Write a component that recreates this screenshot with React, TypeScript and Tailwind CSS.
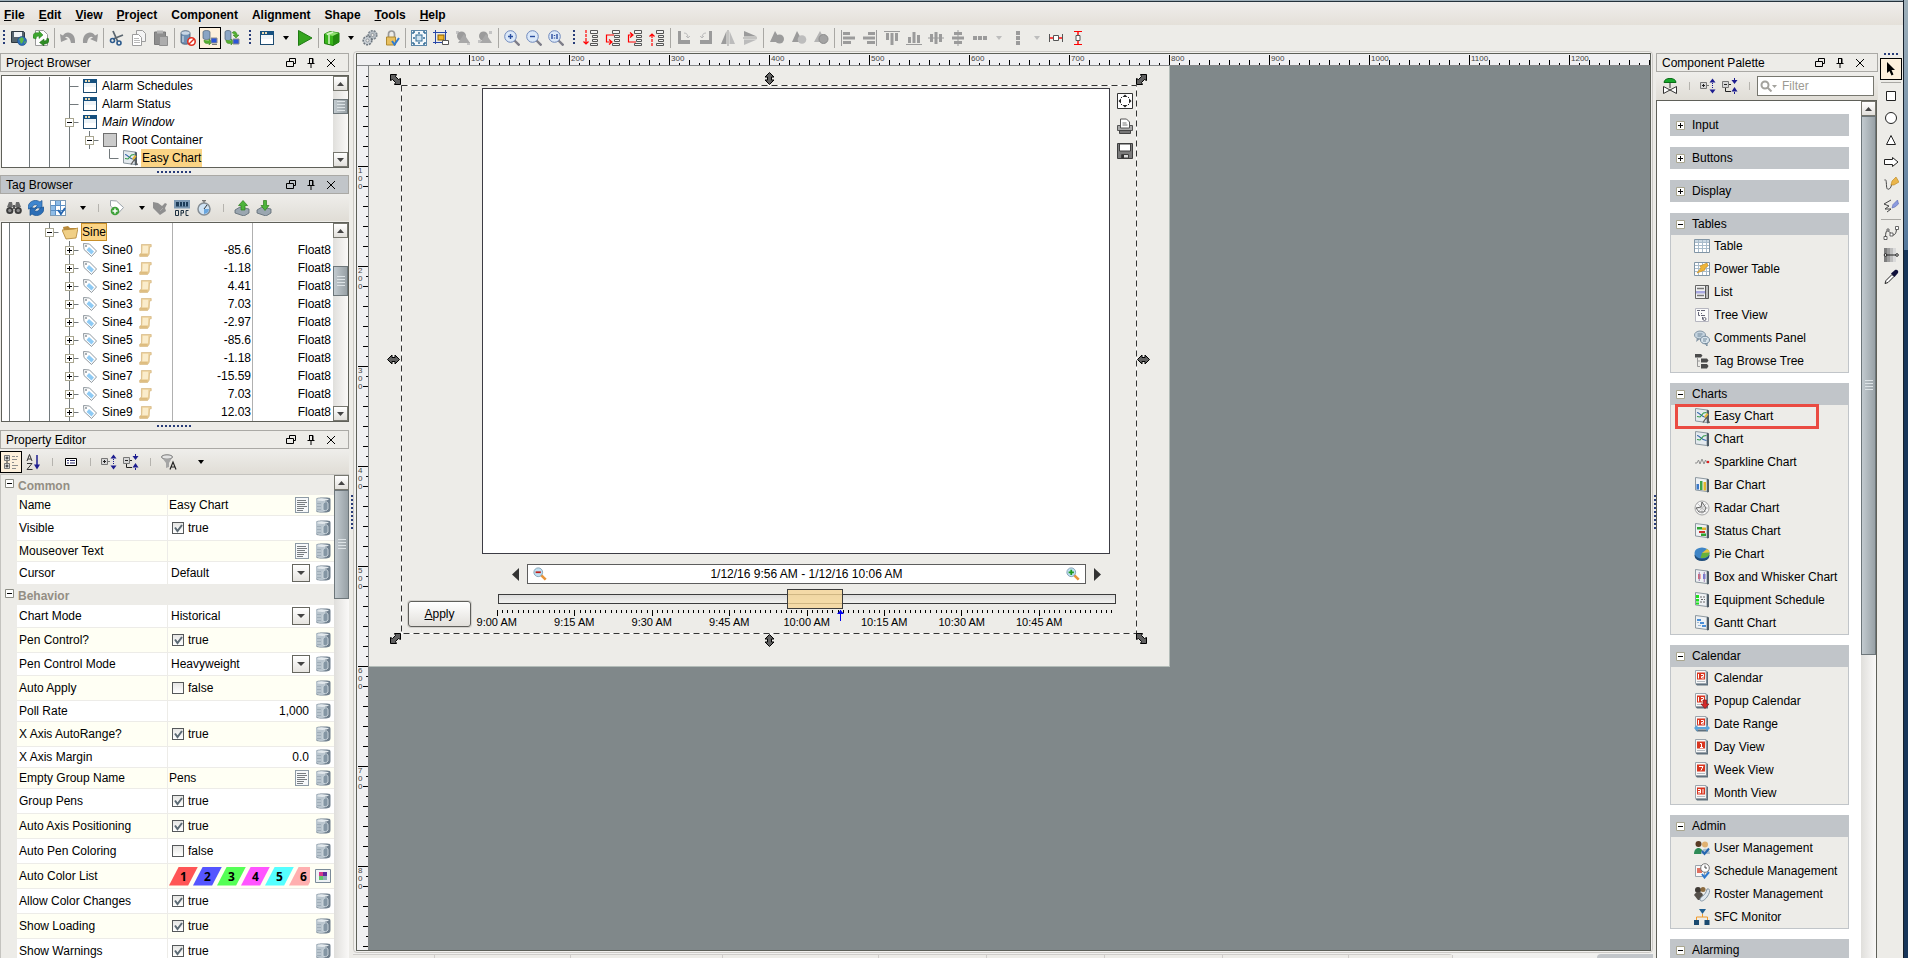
import type { ReactNode } from 'react';
import { clsx } from 'clsx';

type Kids = { children?: ReactNode };

function Svg({ children, className = 'w-4 h-4' }: Kids & { className?: string }) {
  return (
    <svg viewBox="0 0 16 16" className={clsx('shrink-0', className)} fill="none" aria-hidden="true">
      {children}
    </svg>
  );
}

/* ---------- shared glyphs ---------- */

const GRAY = '#9b9b9b';

const windowIcon = (
  <Svg>
    <rect x="1.500" y="1.500" width="13" height="13" fill="#fff" stroke="#1d4b70" />
    <path d="M1 1h14v4H1z" fill="#15507f" />
    <path d="M3 2h2v2H3zM6 2h2v2H6z" fill="#e9d9b0" />
    <path d="M2 5h12v4H2z" fill="#eef4f8" />
  </Svg>
);

const chartPanel = (
  <>
    <path d="M1.500.5L13 2v12.500L1.500 13z" fill="#e4eaef" stroke="#8b979f" />
    <path d="M13 1.500l2 1v12.500l-2 .5z" fill="#4e5c67" />
    <path d="M3 4.500c3 0 4 5 9.500 5" stroke="#2f63a8" strokeWidth="1.100" />
    <path d="M3 8.500l3 .5L9.500 5l3-.5" stroke="#2f9a45" strokeWidth="1.100" />
  </>
);

const easyChartIcon = (
  <Svg>
    {chartPanel}
    <path d="M9 14.500l3.500-5 3 5.500" stroke="#5f5f5f" strokeWidth="1.300" />
    <path d="M10 8.500l3-3.500 1.500 1.500L11.500 10z" fill="#e5b73b" />
  </Svg>
);

const expandIcon = (
  <Svg>
    <path d="M.5 4.500h6v6h-6zM7 7.500h2" stroke="#777" fill="#d7d7d7" />
    <path d="M2 7.500h3M3.500 6v3" stroke="#222" />
    <path d="M9.500 4.500h6l-3-4zM9.500 11.500h6l-3 4z" fill="#1d1d8f" />
    <path d="M12.500 5v6" stroke="#1d1d8f" strokeDasharray="1 1" />
  </Svg>
);

const collapseIcon = (
  <Svg>
    <path d="M.5 3.500h6v6h-6z" stroke="#777" fill="#d7d7d7" />
    <path d="M2 6.500h3" stroke="#222" />
    <path d="M7 6.500h2M3.500 10v3.500H9" stroke="#222" />
    <path d="M9.500 2h6l-3 4zM9.500 13.500h6l-3-4.500z" fill="#1d1d8f" />
    <path d="M12.500 0v2M12.500 14v2" stroke="#1d1d8f" />
  </Svg>
);

const dbCyl = (
  <>
    <path d="M1 3c0-3 9-3 9 0v9c0 3-9 3-9 0z" fill="#6f8fb3" stroke="#44566a" strokeWidth=".8" />
    <ellipse cx="5.500" cy="3" rx="4.200" ry="1.800" fill="#c9d6e4" />
    <path d="M3 6v6" stroke="#dfe8f0" />
  </>
);

const bindIcon = (
  <Svg>
    <path d="M1 3C1 .5 4 .5 9 .5S15.500.5 15.500 3v9c0 3.500-3 3.500-7.500 3.500S1 15.500 1 13z" fill="#6f7f8d" />
    <path d="M1 3c0-2 3-2 4.500-2S10 1.500 10 3v11c-1 1.500-9 1.500-9-1z" fill="#b9c5ce" />
    <path d="M2 3c1-1.500 9-2 12-.5-2 1.500-9 2-12 .5z" fill="#e3e9ed" />
    <path d="M2 6.500h4M2 9.500h4M2 12.500h4" stroke="#9fadb8" />
    <path d="M8 7c1-3 5-3 5 0v5c-1 2-4 2-5 1z" fill="#8496a4" stroke="#dbe3e8" strokeWidth=".8" />
  </Svg>
);

const textEditIcon = (
  <Svg>
    <rect x="1.500" y=".5" width="13" height="15" fill="#f6f8fa" stroke="#8d9aa5" />
    <path d="M3 3.500h9M3 5.500h10M3 7.500h8M3 9.500h10M3 11.500h7M3 13.500h6" stroke="#777c80" />
  </Svg>
);

const lens = (sign: ReactNode) => (
  <Svg>
    <path d="M10.500 10.500l5 5" stroke="#7d7d88" strokeWidth="2.400" />
    <circle cx="6.500" cy="6.500" r="5.800" fill="#dbe8f8" stroke="#6f89bd" />
    <g stroke="#2b4fa0" strokeWidth="1.400">{sign}</g>
  </Svg>
);

/* ---------- main toolbar ---------- */

const dbToClient = (
  <Svg>
    <path d="M1 2c0-2 7-2 7 0v6c0 2-7 2-7 0z" fill="#8aa5c4" stroke="#4c5f73" strokeWidth=".7" />
    <path d="M2 10c0 4 3 4 5 3v2l3-3-3-3v1.500" fill="#55b030" stroke="#2e7a18" strokeWidth=".5" />
    <path d="M9 8h6v5H9z" fill="#2b55d8" stroke="#8c8c8c" />
    <path d="M10 14.500h5" stroke="#777" />
  </Svg>
);

type Tool = { name: string; icon: ReactNode; on?: boolean } | 'sep' | 'dots' | 'caret' | 'caretOff';

const bars = (d: string) => <Svg><path d={d} fill={GRAY} /></Svg>;
const stack = (arrow: string) => (
  <Svg>
    <path d="M7.500.5h7v3h-7zM9.500 5.500h5v2h-5zM9.500 9.500h5v2h-5zM7.500 13.500h7v2h-7z" stroke="#555" fill="#f4f4f4" />
    <path d={arrow} stroke="#f00" strokeWidth="1.200" />
  </Svg>
);

const toolbar: Tool[] = [
  'dots',
  { name: 'Save', icon: (
    <Svg>
      <path d="M.5 1.500h12l1 1v10h-13z" fill="#56646e" stroke="#2f3a42" />
      <path d="M3 2h8v5H3z" fill="#f0f3f5" />
      <circle cx="11" cy="11" r="4.500" fill="#2d6fb8" stroke="#1d4a80" strokeWidth=".6" />
      <path d="M8 9l3-2 2 2-1 3-2 2-1-3zM13 12l2-1-1 3z" fill="#5cb84a" />
    </Svg>) },
  { name: 'Update', icon: (
    <Svg>
      <path d="M2.500.5h8l4 4v11h-12z" fill="#fdfdfd" stroke="#9a9a9a" />
      <path d="M0 8V6c0-3 3-4 6-3V1l4 4-4 3.500V6C4 6 3 7 3 9z" fill="#3da52f" stroke="#237a18" strokeWidth=".5" />
      <path d="M16 9v1c0 3-2 4-5 4v2l-4.500-3.500L11 9v2c2 0 3-1 3-3z" fill="#2e8d24" stroke="#1b6313" strokeWidth=".5" />
    </Svg>) },
  'sep',
  { name: 'Undo', icon: <Svg><path d="M0 4l1 8 7-3-3-1.500c2-2 5-.5 6 5.500h4C16 2 6 0 3 5.500z" fill={GRAY} /></Svg> },
  { name: 'Redo', icon: <Svg><path d="M16 4l-1 8-7-3 3-1.500C9 5.500 6 7 5 13H1C0 2 10 0 13 5.500z" fill={GRAY} /></Svg> },
  'sep',
  { name: 'Cut', icon: (
    <Svg>
      <path d="M4 1l4.500 10M14 5L4 9" stroke="#5c6770" strokeWidth="1.800" />
      <circle cx="3.500" cy="10.500" r="2" stroke="#2c5a8c" strokeWidth="1.600" />
      <circle cx="10" cy="13" r="2" stroke="#2c5a8c" strokeWidth="1.600" />
    </Svg>) },
  { name: 'Copy', icon: (
    <Svg>
      <path d="M5.500.5h6l3 3v8h-9z" fill="#f4f4f4" stroke="#9c9c9c" />
      <path d="M1.500 4.500h6l3 3v8h-9z" fill="#fff" stroke="#9c9c9c" />
      <path d="M3 8.500h5M3 10.500h6M3 12.500h6" stroke="#b9b9b9" />
    </Svg>) },
  { name: 'Paste', icon: (
    <Svg>
      <path d="M1.500 2h11v12.500h-11z" fill="#8e8e8e" stroke="#7a7a7a" />
      <path d="M4 .5h6v3H4z" fill="#b5b5b5" />
      <path d="M6.500 6.500h8v9h-8z" fill="#adadad" stroke="#8e8e8e" />
    </Svg>) },
  'sep',
  { name: 'Comm off', icon: <Svg>{dbCyl}<circle cx="11.500" cy="11.500" r="3.700" fill="#fff" stroke="#e03020" strokeWidth="1.600" /><path d="M9 14l5-5" stroke="#e03020" strokeWidth="1.500" /></Svg> },
  { name: 'Comm read-only', icon: dbToClient, on: true },
  { name: 'Comm read/write', icon: (
    <Svg>
      <path d="M1 2c0-2 6-2 6 0v7c0 2-6 2-6 0z" fill="#8aa5c4" stroke="#4c5f73" strokeWidth=".7" />
      <path d="M8 3c2-3 5-1 5 2h2l-3 3-3-3h2M2 10c0 4 3 4 5 3v2l3-3-3-3v1.500" fill="#55b030" stroke="#2e7a18" strokeWidth=".5" />
      <path d="M9 9h6v5H9z" fill="#2b55d8" stroke="#8c8c8c" />
    </Svg>) },
  'dots',
  { name: 'New window', icon: windowIcon },
  'caret',
  { name: 'Preview', icon: <Svg><path d="M1.500.5L15 8 1.500 15.500z" fill="#35a51f" stroke="#1f7a12" /></Svg> },
  'sep',
  { name: 'Publish', icon: (
    <Svg>
      <path d="M.5 4L6 1.500l9 1.500v9l-6 3.500-8.500-2z" fill="#39b51c" stroke="#1d7a0c" />
      <path d="M.5 4L9 6l6-3-9-1.500z" fill="#8fe070" />
      <path d="M9 6v9.500l6-3.500V3z" fill="#23890f" />
      <path d="M3 4.500l6-2.500M5 5v9" stroke="#d6f5c8" strokeWidth="1.500" />
    </Svg>) },
  'caret',
  { name: 'Project properties', icon: (
    <Svg>
      <circle cx="10.500" cy="5" r="4.300" fill="#b8bfc5" stroke="#7d868e" strokeDasharray="2 1" strokeWidth="1.600" />
      <circle cx="10.500" cy="5" r="1.500" fill="#edece8" stroke="#6d767e" strokeWidth=".6" />
      <circle cx="5.500" cy="10.500" r="4.300" fill="#c9cfd4" stroke="#6d767e" strokeDasharray="2 1" strokeWidth="1.600" />
      <circle cx="5.500" cy="10.500" r="1.500" fill="#edece8" stroke="#6d767e" strokeWidth=".6" />
    </Svg>) },
  { name: 'Security', icon: (
    <Svg>
      <path d="M4.500 8V4c0-4 6-4 6 0v4" stroke="#9a9a9a" strokeWidth="1.700" />
      <path d="M2.500 7h9v8h-9z" fill="#e8c060" stroke="#b08a30" />
      <path d="M8 11l2.500 3.500L15 8" stroke="#2f7ad0" strokeWidth="2" />
    </Svg>) },
  'sep',
  { name: 'Zoom to window', icon: (
    <Svg>
      <rect x=".5" y=".5" width="15" height="15" fill="#f5f9fc" stroke="#5d87a8" />
      <rect x="5" y="5" width="6" height="6" fill="#cfe2ef" stroke="#2f6a94" />
      <path d="M2 2h2M2 2v2M14 2h-2M14 2v2M2 14h2M2 14v-2M14 14h-2M14 14v-2M8 2v2M8 12v2M2 8h2M12 8h2" stroke="#2f6a94" strokeWidth="1.400" />
    </Svg>) },
  { name: 'Selection policy', icon: (
    <Svg>
      <path d="M2.500 0v14M0 2.500h14M12.500 0v10M0 12.500h9" stroke="#2848a8" />
      <rect x="5" y="5" width="6" height="5" fill="#f0b428" stroke="#8a5f00" />
      <path d="M9.500 10.500h6v4h-6z" fill="#fff" stroke="#555" />
    </Svg>) },
  { name: 'Group', icon: <Svg><path d="M1 1h3v3H1zM12 12h3v3h-3z" fill="#c4c4c4" /><circle cx="6.500" cy="6" r="4.500" fill={GRAY} /><path d="M9 4l6 9H3z" fill="#a8a8a8" /></Svg> },
  { name: 'Ungroup', icon: <Svg><path d="M1 10h3v3H1zM12 1h3v3h-3z" fill="#c4c4c4" /><circle cx="6.500" cy="6" r="4.500" fill={GRAY} /><path d="M9 4l6 9H3z" fill="#a8a8a8" /></Svg> },
  'sep',
  { name: 'Zoom in', icon: lens(<path d="M4 6.500h5M6.500 4v5" />) },
  { name: 'Zoom out', icon: lens(<path d="M4 6.500h5" />) },
  { name: 'Actual size', icon: lens(<path d="M4 4v5M9 4v5M6.500 5v1M6.500 7.500v1" />) },
  'dots',
  { name: 'Send to back', icon: stack('M3 0v3M3 4v3M3 8v6M.5 11.500L3 14l2.500-2.500') },
  { name: 'Send backward', icon: stack('M9 5H1.500v7H6M4 9.500L7 12l-3 2.500') },
  { name: 'Bring forward', icon: stack('M9 12H1.500V5H5M3 2.500L6 5 3 7.500') },
  { name: 'Bring to front', icon: stack('M3 16v-3M3 12V9M3 8V4M.5 6.500L3 4l2.500 2.500') },
  'sep',
  { name: 'Rotate right', icon: <Svg><path d="M2 1h3v9h9v4H2z" fill={GRAY} /><path d="M8 3c3 0 4 2 4 5M10 6l2 2 2-2" stroke="#bbb" /></Svg> },
  { name: 'Rotate left', icon: <Svg><path d="M14 1h-3v9H2v4h12z" fill={GRAY} /><path d="M8 3C5 3 4 5 4 8M6 6L4 8 2 6" stroke="#bbb" /></Svg> },
  { name: 'Flip horizontal', icon: <Svg><path d="M6.500 1v13H1z" fill={GRAY} /><path d="M9.500 1v13H15z" fill="#bcbcbc" /><path d="M8 0v16" stroke={GRAY} /></Svg> },
  { name: 'Flip vertical', icon: <Svg><path d="M2 1v5.500h13z" fill={GRAY} /><path d="M2 15V9.500h13z" fill="#bcbcbc" /><path d="M1 8h14" stroke={GRAY} /></Svg> },
  'sep',
  { name: 'Union', icon: <Svg><path d="M1 12L6 1l3 5z" fill={GRAY} /><circle cx="10.500" cy="9" r="4.500" fill={GRAY} /><path d="M1 12h9V6H5z" fill={GRAY} /></Svg> },
  { name: 'Difference', icon: <Svg><path d="M1 12L6 1l6 11z" fill={GRAY} /><circle cx="11" cy="9.500" r="4.300" fill="#bdbdbd" /></Svg> },
  { name: 'Intersection', icon: <Svg><path d="M1 12L7 1l6 11z" fill="#b4b4b4" /><circle cx="10.500" cy="9" r="4.500" fill="#a3a3a3" stroke="#8c8c8c" /></Svg> },
  'sep',
  { name: 'Align left', icon: bars('M1 0h1v16H1zM3 2h7v3H3zM3 6.500h12v3H3zM3 11h8v3H3z') },
  { name: 'Align right', icon: bars('M14 0h1v16h-1zM6 2h7v3H6zM1 6.500h12v3H1zM5 11h8v3H5z') },
  { name: 'Align top', icon: bars('M0 1h16v1H0zM2 3h3v7H2zM6.500 3h3v12h-3zM11 3h3v8h-3z') },
  { name: 'Align bottom', icon: bars('M0 14h16v1H0zM2 7h3v6H2zM6.500 2h3v11h-3zM11 5h3v8h-3z') },
  { name: 'Center vertically', icon: bars('M0 7.500h16v1H0zM2 4h3v8H2zM6.500 2h3v12h-3zM11 4h3v8h-3z') },
  { name: 'Center horizontally', icon: bars('M7.500 0h1v16h-1zM4 2h8v3H4zM2 6.500h12v3H2zM4 11h8v3H4z') },
  { name: 'Row spacing', icon: bars('M1 6h4v4H1zM6 6h4v4H6zM11 6h4v4h-4z') },
  'caretOff',
  { name: 'Column spacing', icon: bars('M6 1h4v4H6zM6 6h4v4H6zM6 11h4v4H6z') },
  'caretOff',
  { name: 'Equal width', icon: <Svg><path d="M2 8h12" stroke="#f00" strokeWidth="1.400" /><path d="M1.500 4v8M14.500 4v8" stroke="#555" /><path d="M5.500 5.500h5v5h-5z" fill="#fff" stroke="#555" /></Svg> },
  { name: 'Equal height', icon: <Svg><path d="M8 2v12" stroke="#f00" strokeWidth="1.400" /><path d="M4 1.500h8M4 14.500h8" stroke="#f00" /><path d="M6 5.500h4v5H6z" fill="#fff" stroke="#555" /></Svg> },
];

function Caret({ className = 'w-4 justify-center', off }: { className?: string; off?: boolean }) {
  return (
    <button aria-label="More" className={clsx('flex h-full items-center', className)}>
      <svg viewBox="0 0 6 4" className="w-1.5 h-1"><path d="M0 0h6L3 4z" fill={off ? '#bdbdbd' : '#000'} /></svg>
    </button>
  );
}

function Sep() {
  return <span className="flex w-4 justify-center"><span className="w-px h-2 bg-[#b5b3ae]" /></span>;
}

function ToolButton({ name, on, children }: Kids & { name: string; on?: boolean }) {
  return (
    <button aria-label={name} className={clsx('flex w-[22px] h-[22px] shrink-0 items-center justify-center', on && 'border border-black bg-[#fdf0dc]')}>
      {children}
    </button>
  );
}

function Dots({ vertical }: { vertical?: boolean }) {
  return vertical
    ? <span className="w-[2px] h-[34px] bg-[repeating-linear-gradient(180deg,#283c78_0_2px,transparent_2px_4px)]" />
    : <span className="w-[35px] h-[2px] bg-[repeating-linear-gradient(90deg,#283c78_0_2px,transparent_2px_4px)]" />;
}

/* ---------- docked panel pieces ---------- */

function PanelTitle({ title, active }: { title: string; active?: boolean }) {
  return (
    <div className={clsx('flex h-[19px] shrink-0 items-center border border-[#aaa9a5] pl-[5px] pr-[7px]', active && 'bg-[#c1c5c9]')}>
      <h2 className="flex-1">{title}</h2>
      <button aria-label="Float" className="flex w-5 justify-center">
        <svg viewBox="0 0 10 10" className="w-2.5 h-2.5" fill="none" stroke="#000"><path d="M3.500 3.500v-3h6v5h-2M.5 3.500h7v5h-7z" /></svg>
      </button>
      <button aria-label="Pin" className="flex w-5 justify-center">
        <svg viewBox="0 0 8 10" className="w-2 h-2.5" fill="none" stroke="#000"><path d="M2 .5h4v5M2.500.5v5M.5 5.500h7M5.500 1v4M4 6v4" /></svg>
      </button>
      <button aria-label="Close" className="flex w-5 justify-center">
        <svg viewBox="0 0 8 8" className="w-2 h-2" fill="none" stroke="#000"><path d="M0 0l8 8M8 0L0 8" /></svg>
      </button>
    </div>
  );
}

function Scrollbar({ thumb, noEnd }: { thumb: string; noEnd?: boolean }) {
  const btn = 'flex h-[15px] shrink-0 items-center justify-center border border-[#77776f] bg-gradient-to-b from-white to-[#e2e0dc]';
  return (
    <div className="flex w-[15px] shrink-0 flex-col bg-gradient-to-r from-[#e0dfdc] to-[#faf9f8]">
      <button aria-label="Scroll up" className={btn}>
        <svg viewBox="0 0 7 4" className="w-[7px] h-1"><path d="M0 4h7L3.500 0z" fill="#444" /></svg>
      </button>
      <div className={clsx('flex shrink-0 items-center justify-center border border-[#6d767a] bg-gradient-to-r from-[#c2cacf] to-[#98a1a6]', thumb)}>
        <span className="w-2 h-[11px] bg-[repeating-linear-gradient(180deg,#dde3e6_0_1px,transparent_1px_3px)]" />
      </div>
      <span className="flex-1" />
      {!noEnd && (
        <button aria-label="Scroll down" className={btn}>
          <svg viewBox="0 0 7 4" className="w-[7px] h-1"><path d="M0 0h7L3.500 4z" fill="#444" /></svg>
        </button>
      )}
    </div>
  );
}

// guide cells: v line, t tee, m minus box, p plus box, l elbow, _ blank
function Guides({ kinds }: { kinds: string }) {
  return (
    <>
      {kinds.split('').map((k, i) => (
        <svg key={i} viewBox="0 0 20 18" className="w-5 h-[18px] shrink-0" fill="none" stroke="#72797c" aria-hidden="true">
          {'vtmp'.includes(k) && <path d="M7.500 0v18" />}
          {k === 'l' && <path d="M7.500 0v9.500h9" />}
          {'tmp'.includes(k) && <path d="M7.500 9.500h9" />}
          {'mp'.includes(k) && <rect x="3.500" y="5.500" width="8" height="8" fill="#fff" stroke="#a9a690" />}
          {'mp'.includes(k) && <path d={k === 'p' ? 'M5 9.500h5M7.500 7v5' : 'M5 9.500h5'} stroke="#000" />}
        </svg>
      ))}
    </>
  );
}

/* ---------- project browser ---------- */

const projectRows = [
  { guides: '_vvt', label: 'Alarm Schedules', icon: windowIcon },
  { guides: '_vvt', label: 'Alarm Status', icon: windowIcon },
  { guides: '_vvm', label: 'Main Window', icon: windowIcon, italic: true },
  { guides: '_vvvm', label: 'Root Container', icon: <Svg><rect x="1.500" y="1.500" width="13" height="13" fill="#cbcbcb" stroke="#6f6f6f" /></Svg> },
  { guides: '_vvv_l', label: 'Easy Chart', icon: easyChartIcon, selected: true },
];

function ProjectBrowser() {
  return (
    <section>
      <PanelTitle title="Project Browser" />
      <div className="ml-px mt-[3px] flex h-[93px] border border-[#5f6059] bg-white">
        <ul className="flex-1 overflow-hidden pt-px">
          {projectRows.map(r => (
            <li key={r.label} className="flex h-[18px] items-center">
              <Guides kinds={r.guides} />
              {r.icon}
              <span className={clsx('ml-[3px] h-[18px] px-px leading-[18px]', r.italic && 'italic', r.selected && 'bg-[#fbd485]')}>{r.label}</span>
            </li>
          ))}
        </ul>
        <Scrollbar thumb="mt-2 h-[15px]" />
      </div>
    </section>
  );
}

/* ---------- tag browser ---------- */

const tags = [
  ['Sine0', '-85.6'], ['Sine1', '-1.18'], ['Sine2', '4.41'], ['Sine3', '7.03'], ['Sine4', '-2.97'],
  ['Sine5', '-85.6'], ['Sine6', '-1.18'], ['Sine7', '-15.59'], ['Sine8', '7.03'], ['Sine9', '12.03'],
];

const tagIcon = (
  <Svg>
    <path d="M1.500 1.500l6 .5 7 7-5 5.500-7.500-7z" fill="#fff" stroke="#8f989f" />
    <path d="M7 5l5 4.500-2.500 3-5-4.500z" fill="#8fcbf5" />
    <circle cx="4" cy="4" r="1" fill="#8b949b" />
  </Svg>
);

const scrollIcon = (
  <Svg className="w-[13px] h-[13px]">
    <path d="M3 .5h12v3h-2l-.5 9-2 3H1C0 14 .500 12 3 11.500z" fill="#ecd09a" stroke="#d0b075" strokeWidth=".8" />
    <path d="M4.500 2h7l-.5 9.500H4z" fill="#faeccb" />
    <path d="M1.500 13.500h9" stroke="#c9a05c" />
  </Svg>
);

function TagBrowser() {
  return (
    <section>
      <PanelTitle title="Tag Browser" active />
      <div className="flex h-[27px] items-center bg-gradient-to-b from-[#efeeeb] to-[#e0ddd6] pl-[3px]">
        <ToolButton name="Find">
          <Svg>
            <path d="M3 2h3l1 5H1zM10 2h3l2 5H9z" fill="#6b6b6b" />
            <circle cx="3.800" cy="10.500" r="3.600" fill="#3c3c3c" /><circle cx="12.200" cy="10.500" r="3.600" fill="#3c3c3c" />
            <circle cx="3.800" cy="10.500" r="1.700" fill="#8b8b8b" /><circle cx="12.200" cy="10.500" r="1.700" fill="#8b8b8b" />
            <path d="M7 5h2v4H7z" fill="#555" />
          </Svg>
        </ToolButton>
        <ToolButton name="Refresh">
          <Svg>
            <path d="M0 9C-1 2 7-2 12 2l2-1.500V8H7l2.500-2.500C7 4 5 5 4 8z" fill="#3f86cf" stroke="#1d5590" strokeWidth=".7" />
            <path d="M16 7c1 7-7 11-12 7l-2 1.500V8h7l-2.500 2.500C9 12 11 11 12 8z" fill="#2c6eb6" stroke="#1d5590" strokeWidth=".7" />
          </Svg>
        </ToolButton>
        <ToolButton name="Columns">
          <Svg>
            <rect x=".5" y=".5" width="15" height="15" fill="#fff" stroke="#7e9bb5" />
            <path d="M1 6h4v9H1zM5 1h5v4H5z" fill="#8fbce6" />
            <path d="M1 5.500h14M1 10.500h14M10.500 1v14M5.500 1v14" stroke="#5a8fc5" /><path d="M8 10l3 4 4-6" stroke="#2566b0" strokeWidth="1.800" />
          </Svg>
        </ToolButton>
        <Caret className="w-[21px] justify-end pr-1" />
        <Sep />
        <ToolButton name="New tag">
          <Svg><path d="M1.500.5l6 .5 7 6.500-5 5.500-8-7z" fill="#fff" stroke="#9aa3aa" /><circle cx="6" cy="11" r="4.300" fill="#3fa13a" /><path d="M3.500 11h5M6 8.500v5" stroke="#fff" strokeWidth="1.500" /></Svg>
        </ToolButton>
        <Caret className="w-[21px] justify-end pr-1" />
        <ToolButton name="Unplug">
          <Svg><path d="M1 2l5 1 4 3 3-3 2 1-2 4 1 3-6 4-7-7z" fill="#8f8f8f" /><path d="M8 11l3-3" stroke="#aaa" /></Svg>
        </ToolButton>
        <ToolButton name="OPC browser">
          <Svg>
            <path d="M0 0h16v8.500H0z" fill="#7d99b3" /><path d="M2 2h12v4.500H2z" fill="#1d3c58" />
            <path d="M5.500 2v4.500M8.500 2v4.500M11.500 2v4.500" stroke="#7fa0bb" />
            <path d="M1.500 10.500h3v5h-3zM7 16v-5.500h2.500V13H7M14.500 10.500h-2.500v5h2.500" stroke="#1d3040" />
          </Svg>
        </ToolButton>
        <ToolButton name="Stopwatch">
          <Svg><path d="M6 .5h4M8 1v2" stroke="#777" strokeWidth="1.500" /><circle cx="8" cy="9" r="6" fill="#cfe3f5" stroke="#848c93" strokeWidth="1.500" /><path d="M8 9l3-4" stroke="#333" /><path d="M8 9h5a5 5 0 01-5 5z" fill="#6aa6de" /></Svg>
        </ToolButton>
        <Sep />
        <ToolButton name="Export tags">
          <Svg><path d="M1 10l5-3 9 2v4l-5 3-9-3z" fill="#9aa6b0" stroke="#5c6872" strokeWidth=".8" /><path d="M7 10V5.500H4.500L9 .5 13.500 5.500H11V10z" fill="#4db43a" stroke="#2b7d1d" strokeWidth=".7" /></Svg>
        </ToolButton>
        <ToolButton name="Import tags">
          <Svg><path d="M1 10l5-3 9 2v4l-5 3-9-3z" fill="#9aa6b0" stroke="#5c6872" strokeWidth=".8" /><path d="M7.500 .5v5H5L9 10.500 13 5.500h-2.500v-5z" fill="#4db43a" stroke="#2b7d1d" strokeWidth=".7" /></Svg>
        </ToolButton>
      </div>
      <div className="ml-px mt-px flex h-[200px] border border-[#5f6059] bg-white">
        <table className="min-w-0 flex-1 table-fixed border-separate border-spacing-0">
          <colgroup><col className="w-[171px]" /><col className="w-20" /><col /></colgroup>
          <tbody>
            <tr className="h-[18px]">
              <td className="border-r border-[#b0b0b0] p-0">
                <div className="flex h-[18px] items-center">
                  <Guides kinds="vvm" />
                  <Svg><path d="M1 3l5-1 2 2h6v9H3z" fill="#b98a3a" /><path d="M0 6l12-1 4-1-2 10-10 1z" fill="#f0cf86" stroke="#b08435" strokeWidth=".8" /></Svg>
                  <span className="ml-[3px] h-[18px] border border-[#c98f28] bg-[#fbd485] leading-4">Sine</span>
                </div>
              </td>
              <td className="border-r border-[#b0b0b0] p-0" /><td className="p-0" />
            </tr>
            {tags.map(([name, value]) => (
              <tr key={name} className="h-[18px]">
                <td className="border-r border-[#b0b0b0] p-0">
                  <div className="flex h-[18px] items-center">
                    <Guides kinds="vvvp" />
                    {tagIcon}
                    <span className="ml-1 mr-1.5">{name}</span>
                    {scrollIcon}
                  </div>
                </td>
                <td className="border-r border-[#b0b0b0] p-0 pr-px text-right leading-[18px]">{value}</td>
                <td className="p-0 pr-0.5 text-right leading-[18px]">Float8</td>
              </tr>
            ))}
          </tbody>
        </table>
        <Scrollbar thumb="mt-7 h-[30px]" />
      </div>
    </section>
  );
}

/* ---------- property editor ---------- */

type Prop = { label: string; kind: 'text' | 'check' | 'select' | 'number' | 'colors'; value?: string };

const common: Prop[] = [
  { label: 'Name', kind: 'text', value: 'Easy Chart' },
  { label: 'Visible', kind: 'check', value: 'true' },
  { label: 'Mouseover Text', kind: 'text', value: '' },
  { label: 'Cursor', kind: 'select', value: 'Default' },
];

const behavior: Prop[] = [
  { label: 'Chart Mode', kind: 'select', value: 'Historical' },
  { label: 'Pen Control?', kind: 'check', value: 'true' },
  { label: 'Pen Control Mode', kind: 'select', value: 'Heavyweight' },
  { label: 'Auto Apply', kind: 'check', value: 'false' },
  { label: 'Poll Rate', kind: 'number', value: '1,000' },
  { label: 'X Axis AutoRange?', kind: 'check', value: 'true' },
  { label: 'X Axis Margin', kind: 'number', value: '0.0' },
  { label: 'Empty Group Name', kind: 'text', value: 'Pens' },
  { label: 'Group Pens', kind: 'check', value: 'true' },
  { label: 'Auto Axis Positioning', kind: 'check', value: 'true' },
  { label: 'Auto Pen Coloring', kind: 'check', value: 'false' },
  { label: 'Auto Color List', kind: 'colors' },
  { label: 'Allow Color Changes', kind: 'check', value: 'true' },
  { label: 'Show Loading', kind: 'check', value: 'true' },
  { label: 'Show Warnings', kind: 'check', value: 'true' },
];

const rowHeight = { text: 'h-[21px]', number: 'h-[21px]', check: 'h-[25px]', colors: 'h-[25px]', select: 'h-[23px]' };
const swatches = ['bg-[#ff5555]', 'bg-[#5555ff]', 'bg-[#55ff55]', 'bg-[#ff55ff]', 'bg-[#55ffff]', 'bg-[#ffafaf]'];

function PropValue({ p, id }: { p: Prop; id: string }) {
  if (p.kind === 'check') {
    return (
      <label className="flex flex-1 items-center gap-1 pl-1">
        <span className="grid">
          <input id={id} type="checkbox" defaultChecked={p.value === 'true'} className="peer col-start-1 row-start-1 w-3 h-3 appearance-none border border-[#55585a] bg-gradient-to-b from-[#e6e6e4] to-white" />
          <svg viewBox="0 0 12 12" className="pointer-events-none invisible col-start-1 row-start-1 w-3 h-3 peer-checked:visible" fill="none"><path d="M3 5.500L5.500 9 10 3" stroke="#5c6a74" strokeWidth="2" /></svg>
        </span>
        {p.value}
      </label>
    );
  }
  if (p.kind === 'select') {
    return (
      <span className="grid flex-1">
        <select id={id} className="col-start-1 row-start-1 appearance-none bg-transparent pl-[3px]"><option>{p.value}</option></select>
        <span className="pointer-events-none col-start-1 row-start-1 flex w-[18px] h-[18px] items-center justify-center justify-self-end border border-[#66665f] bg-gradient-to-b from-white to-[#e6e4e0]">
          <svg viewBox="0 0 8 4" className="w-2 h-1"><path d="M0 0h8L4 4z" fill="#444" /></svg>
        </span>
      </span>
    );
  }
  if (p.kind === 'colors') {
    return (
      <span className="flex w-[142px] overflow-hidden pl-px">
        {swatches.map((c, i) => (
          <button key={c} className={clsx('-mr-[5px] w-[29px] h-[19px] shrink-0 text-center font-["Open_Sans"] text-xs font-bold leading-[20px] [clip-path:polygon(34%_0,100%_0,66%_100%,0_100%)]', c)}>{i + 1}</button>
        ))}
      </span>
    );
  }
  return <input id={id} defaultValue={p.value} className={clsx('min-w-0 flex-1 bg-transparent', p.kind === 'number' ? 'text-right' : 'pl-px')} />;
}

function PropGroup({ title, props, odd }: { title: string; props: Prop[]; odd: number }) {
  return (
    <tbody>
      <tr className="h-5">
        <th colSpan={3} className="p-0 text-left">
          <div className="flex h-5 items-start">
            <svg viewBox="0 0 9 9" className="ml-1 mt-1 w-[9px] h-[9px]" fill="none"><path d="M.5.5h8v8h-8z" fill="#fff" stroke="#8b8c84" /><path d="M2 4.500h5" stroke="#000" /></svg>
            <span className="ml-1 pt-0.5 leading-[18px] text-[#938e84]">{title}</span>
          </div>
        </th>
      </tr>
      {props.map((p, i) => {
        const id = 'prop-' + p.label.replace(/\W+/g, '-').toLowerCase();
        const cell = clsx('border-b border-[#edece8] p-0', i % 2 === odd ? 'bg-[#fffff4]' : 'bg-white');
        return (
          <tr key={p.label} className={rowHeight[p.kind]}>
            <td className="p-0" />
            <td className={clsx(cell, 'border-r pl-0.5')}><label htmlFor={id}>{p.label}</label></td>
            <td className={cell}>
              <div className="flex items-center pr-[3px]">
                <PropValue p={p} id={id} />
                {p.kind === 'text' && <button aria-label="Edit text" className="mx-[5px]">{textEditIcon}</button>}
                {p.kind === 'number' && <span className="w-1.5" />}
                {p.kind === 'select' && <span className="w-[5px]" />}
                {p.kind === 'colors'
                  ? <button aria-label="Pick colors" className="ml-auto"><Svg><path d="M.5 1.500h15v13H.5z" fill="#eef2f5" stroke="#7b8b99" /><path d="M4 4h4v4H4z" fill="#d33a8c" /><path d="M8 4h4v4H8z" fill="#5c2a9c" /><path d="M4 8h4v4H4z" fill="#5fc86a" /><path d="M8 8h4v4H8z" fill="#8fb0b8" /></Svg></button>
                  : <button aria-label="Bind property">{bindIcon}</button>}
              </div>
            </td>
          </tr>
        );
      })}
    </tbody>
  );
}

function PropertyEditor() {
  return (
    <section className="flex min-h-0 flex-1 flex-col">
      <PanelTitle title="Property Editor" />
      <div className="flex h-[25px] shrink-0 items-center bg-gradient-to-b from-[#efeeeb] to-[#e0ddd6]">
        <ToolButton name="Categorized" on>
          <Svg><path d="M1.500 1.500h5v5h-5zM1.500 9.500h5v5h-5z" fill="#ddd" stroke="#777" /><path d="M2.500 4h3M4 2.500v3M2.500 12h3M4 10.500v3M4 7v2" stroke="#222" /><path d="M9 2.500h3M13 2.500h2M9 5.500h5M9 8.500h2M9 11.500h6M9 14.500h4" stroke="#8d8d8d" /></Svg>
        </ToolButton>
        <ToolButton name="Alphabetical">
          <Svg><path d="M2 7l2.500-6.500L7 7M3 5h3M2 9.500h5L2 15.500h5.500" stroke="#333" /><path d="M12 1v12" stroke="#1d1d8f" strokeWidth="1.500" /><path d="M9 10.500h6l-3 5z" fill="#1d1d8f" /></Svg>
        </ToolButton>
        <Sep />
        <ToolButton name="Description">
          <svg viewBox="0 0 12 8" className="h-2 w-3" fill="none"><path d="M.5.5h11v7H.5z" stroke="#000" fill="#fff" /><path d="M2 2.500h2M5 2.500h5M2 5h2M5 5h5" stroke="#2a2a66" /></svg>
        </ToolButton>
        <Sep />
        <ToolButton name="Expand all">{expandIcon}</ToolButton>
        <ToolButton name="Collapse all">{collapseIcon}</ToolButton>
        <Sep />
        <ToolButton name="Filter">
          <Svg><ellipse cx="6" cy="3" rx="5.500" ry="2.200" fill="#e3e3e3" stroke="#777" /><path d="M.5 3L5 9v5l3-1V9l3.500-6c-1 3-10 3-11 0" fill="#a5a5a5" /><path d="M9 15.500L12 8l3 7.500M10 13h4" stroke="#222" strokeWidth="1.200" /></Svg>
        </ToolButton>
        <Caret className="w-[26px] justify-end pr-0.5" />
      </div>
      <div className="flex min-h-0 flex-1 overflow-hidden border-l border-t border-[#c4c3bf]">
        <div className="min-w-0 flex-1 overflow-hidden">
          <table className="w-full table-fixed border-separate border-spacing-0">
            <colgroup><col className="w-4" /><col className="w-[151px]" /><col /></colgroup>
            <PropGroup title="Common" props={common} odd={0} />
            <PropGroup title="Behavior" props={behavior} odd={1} />
          </table>
        </div>
        <Scrollbar thumb="h-[109px]" noEnd />
      </div>
    </section>
  );
}

/* ---------- canvas ---------- */

function HRuler() {
  return (
    <div className="flex h-3 overflow-hidden border-b border-[#85878a] bg-[#f0f0f2] pl-3">
      {Array.from({ length: 13 }, (_, n) => (
        <div key={n} className="relative h-3 w-[100px] shrink-0">
          <svg viewBox="0 0 100 12" className="h-3 w-[100px]" stroke="#000">
            {n > 0 && <path d="M.5 1v11" />}
            {[1, 3, 5, 7, 9].map(i => <path key={i} d={`M${i * 10 + 0.5} 9v2`} />)}
            {[2, 4, 6, 8].map(i => <path key={i} d={`M${i * 10 + 0.5} 6v5`} />)}
          </svg>
          {n > 0 && <span className="absolute left-0.5 top-0 text-[8px] leading-[9px] text-[#444]">{n * 100}</span>}
        </div>
      ))}
    </div>
  );
}

function VRuler() {
  return (
    <div className="w-3 shrink-0 overflow-hidden border-r border-[#85878a] bg-[#f0f0f2]">
      {Array.from({ length: 9 }, (_, n) => (
        <div key={n} className="relative h-[100px] w-3">
          <svg viewBox="0 0 12 100" className="h-[100px] w-3" stroke="#000">
            {n > 0 && <path d="M1 .5h11" />}
            {[1, 3, 5, 7, 9].map(i => <path key={i} d={`M9 ${i * 10 + 0.5}h2`} />)}
            {[2, 4, 6, 8].map(i => <path key={i} d={`M6 ${i * 10 + 0.5}h5`} />)}
          </svg>
          {n > 0 && (
            <span className="absolute left-px top-px w-[5px] break-all text-[8px] leading-[8px] text-[#444]">{n * 100}</span>
          )}
        </div>
      ))}
    </div>
  );
}

const handleShapes = {
  v: 'M6.500.5l4.500 4.500H8.500v3H11l-4.500 4.500L2 8h2.500V5H2z',
  h: 'M.5 6.500L5 2v2.500h3V2l4.500 4.500L8 11V8.500H5V11z',
  nwse: 'M1.500 1.500h6L6.500 3.500l3 3 2-1v6h-6l1-2-3-3-2 1z',
  nesw: 'M11.500 1.500h-6l1 2-3 3-2-1v6h6l-1-2 3-3 2 1z',
};

function Handle({ className, shape }: { className: string; shape: keyof typeof handleShapes }) {
  return (
    <svg viewBox="0 0 13 13" className={clsx('absolute w-[13px] h-[13px]', className)}>
      <path d={handleShapes[shape]} fill="#606060" stroke="#000" />
    </svg>
  );
}

const hours = ['9:00 AM', '9:15 AM', '9:30 AM', '9:45 AM', '10:00 AM', '10:15 AM', '10:30 AM', '10:45 AM'];

function EasyChart() {
  return (
    <div className="absolute left-8 top-[19px] flex h-[549px] w-[736px] flex-col">
      <svg className="pointer-events-none absolute inset-0 h-full w-full" fill="none">
        <rect x=".5" y=".5" width="735" height="548" stroke="#fff" />
        <rect x=".5" y=".5" width="735" height="548" stroke="#333" strokeDasharray="6 4" />
      </svg>

      <div className="flex pl-[81px] pt-[3px]">
        <div className="h-[466px] w-[628px] border border-[#3c3c44] bg-white" />
        <div className="ml-[7px] flex flex-col gap-[9px] pt-[5px]">
          <button aria-label="Maximize"><Svg><path d="M.5.5h15v15H.5z" fill="#fff" stroke="#333" /><path d="M8 1.500L10.500 4h-5zM8 14.500L10.500 12h-5zM1.500 8L4 5.500v5zM14.500 8L12 5.500v5zM4 4h1v1H4zM11 4h1v1h-1zM4 11h1v1H4zM11 11h1v1h-1z" fill="#222" /></Svg></button>
          <button aria-label="Print"><Svg><path d="M.5 7.500h15v5H.5z" fill="#a8a8a8" stroke="#555" /><path d="M3.500 10V1h6l3 3v6z" fill="#fff" stroke="#555" /><path d="M5.500 5h4M5.500 7h5" stroke="#777" /><path d="M2.500 12.500h11v3h-11z" fill="#777" stroke="#444" /></Svg></button>
          <button aria-label="Save data"><Svg><path d="M.5.5h15v15H.5z" fill="#7c7c7c" stroke="#3f3f3f" /><path d="M2.500 1h11v7h-11z" fill="#fff" stroke="#3f3f3f" /><path d="M4.500 11.500h7V15h-7z" fill="#ddd" stroke="#3f3f3f" /><path d="M5 12h2v3H5z" fill="#333" /></Svg></button>
        </div>
      </div>

      <div className="mt-2.5 flex items-center gap-2 pl-[111px] pr-9">
        <button aria-label="Earlier"><svg viewBox="0 0 7 13" className="w-[7px] h-[13px]"><path d="M7 0v13L0 6.500z" fill="#333" /></svg></button>
        <div className="flex h-5 flex-1 items-center border border-[#5d5d5d] bg-white px-[5px]">
          <button aria-label="Zoom out"><Svg className="w-3.5 h-3.5"><path d="M9 9l5.500 5.500" stroke="#e8953a" strokeWidth="3" /><circle cx="6" cy="6" r="5" fill="#bfe0f2" stroke="#7d9cb0" /><path d="M3 6h6" stroke="#c0201a" strokeWidth="2" /></Svg></button>
          <span className="flex-1 text-center">1/12/16 9:56 AM - 1/12/16 10:06 AM</span>
          <button aria-label="Zoom in"><Svg className="w-3.5 h-3.5"><path d="M9 9l5.500 5.500" stroke="#e8953a" strokeWidth="3" /><circle cx="6" cy="6" r="5" fill="#bfe0f2" stroke="#7d9cb0" /><path d="M3 6h6M6 3v6" stroke="#1d9a20" strokeWidth="2" /></Svg></button>
        </div>
        <button aria-label="Later"><svg viewBox="0 0 7 13" className="w-[7px] h-[13px]"><path d="M0 0v13l7-6.500z" fill="#333" /></svg></button>
      </div>

      <div className="flex">
        <div className="w-24 pl-[7px] pt-[17px]">
          <button className="h-[26px] w-[63px] rounded-[3px] border border-[#5f5f5b] bg-gradient-to-b from-white to-[#e2e0db] shadow-[0_0_0_1px_#d3d1cd]"><u>A</u>pply</button>
        </div>
        <div className="relative w-[640px] shrink-0 pt-2.5">
          <div className="ml-px h-2.5 w-[618px] border border-[#3c3c3c] bg-gradient-to-b from-[#dcdcdc] to-[#f2f2f0]" />
          <div className="absolute left-[290px] top-[5px] h-5 w-[56px] border border-[#3c3c3c] bg-[#f5d696]/80" />
          <svg viewBox="0 0 640 12" className="mt-1.5 h-3 w-[640px]" fill="none">
            {Array.from({ length: 120 }, (_, m) => (
              <path key={m} d={`M${Math.round(m * 5.16) + 0.5} 0v${m % 15 ? 3 : 6}`} stroke="#000" />
            ))}
            <path d="M343.500 0v11" stroke="#0000f0" />
            <path d="M343.500 0l3.500 4h-7z" fill="#0000f0" />
          </svg>
          <div className="-ml-[39px] -mt-1.5 grid w-[620px] grid-cols-8 text-center text-[11px] leading-[12px]">
            {hours.map(h => <span key={h}>{h}</span>)}
          </div>
        </div>
      </div>

      <Handle className="-left-3 -top-3" shape="nwse" />
      <Handle className="left-[362px] -top-[13px]" shape="v" />
      <Handle className="-right-[11px] -top-3" shape="nesw" />
      <Handle className="-left-3.5 top-[268px]" shape="h" />
      <Handle className="-right-[13px] top-[268px]" shape="h" />
      <Handle className="-left-3 -bottom-[11px]" shape="nesw" />
      <Handle className="left-[362px] -bottom-[13px]" shape="v" />
      <Handle className="-right-[11px] -bottom-[11px]" shape="nwse" />
    </div>
  );
}

function Workspace() {
  return (
    <main className="flex min-w-0 flex-1 flex-col pt-px">
      <div className="flex min-h-0 flex-1 flex-col rounded-sm border border-[#cbc9c5] bg-[#f1f0ee] p-px pl-0.5">
        <div className="flex min-h-0 flex-1 flex-col border border-[#5c5f58]">
          <HRuler />
          <div className="flex min-h-0 flex-1 overflow-hidden">
            <VRuler />
            <div className="relative flex-1 overflow-hidden bg-[#80888a]">
              <div className="relative h-[601px] w-[801px] border-b border-r border-[#b3bcb8] bg-[#edece8]">
                <EasyChart />
              </div>
            </div>
          </div>
        </div>
      </div>
      <div className="flex h-[5px] shrink-0 justify-between bg-[#f0f0ee] pt-px">
        <div className="grid w-[1100px] grid-cols-[82px_136px_152px_156px_108px_118px_118px_126px_1fr] rounded-tr-sm border-t border-[#cfcdca]">
          {Array.from({ length: 9 }, (_, i) => <span key={i} className="border-r border-[#cfcdca] bg-[#edece8]" />)}
        </div>
        <span className="w-14 rounded-tl-sm bg-[#c1c5c9]" />
      </div>
    </main>
  );
}

/* ---------- component palette ---------- */

const skewPanel = <><path d="M1.500.5L13 2v12.500L1.500 13z" fill="#eef1f4" stroke="#8b979f" /><path d="M13 1.500l2 1v12.500l-2 .5z" fill="#4e5c67" /></>;
const cal = (mark: string, extra?: ReactNode) => (
  <Svg>
    <path d="M1.500.5h10.500l.5 13h-11z" fill="#f8f8f8" stroke="#9aa4ac" />
    <path d="M12.500 1l1.500 1v13.500H3l-1.500-1.500h11z" fill="#60707d" />
    <path d="M3 2.500h8v7H3z" fill="#d8351f" />
    <path d={mark} stroke="#fff" />
    <path d="M3 11.500h8" stroke="#b5bcc2" />
    {extra}
  </Svg>
);
const twelve = 'M4.500 4v4.500M7 4.500h2.500v2H7.500v1.500H10';

const palette: { name: string; items?: { label: string; icon: ReactNode; marked?: boolean }[] }[] = [
  { name: 'Input' },
  { name: 'Buttons' },
  { name: 'Display' },
  { name: 'Tables', items: [
    { label: 'Table', icon: <Svg><path d="M.5 1.500h15v13H.5z" fill="#fff" stroke="#8195a5" /><path d="M1 2h14v2H1z" fill="#c9d7e2" /><path d="M1 4.500h14M1 7.500h14M1 10.500h14M4.500 2v12M8.500 2v12M12.500 2v12" stroke="#a9bccb" /></Svg> },
    { label: 'Power Table', icon: <Svg><path d="M.5 1.500h15v13H.5z" fill="#fff" stroke="#8195a5" /><path d="M1 4.500h14M1 7.500h14M1 10.500h14M4.500 2v12M8.500 2v12M12.500 2v12" stroke="#a9bccb" /><path d="M13 2L6 5l1 2-4 5 8-3V7l3-2z" fill="#eeb437" stroke="#c98b1b" strokeWidth=".6" /></Svg> },
    { label: 'List', icon: <Svg><path d="M1.500 1.500h10v13h-10z" fill="#f1f1f1" stroke="#666" /><path d="M11.500 1.500h3v13h-3z" fill="#bbb" stroke="#555" /><path d="M3 4.500h7M3 11.500h7" stroke="#777" strokeWidth="1.500" /><path d="M2 7h9v2.500H2z" fill="#a9a9e0" /></Svg> },
    { label: 'Tree View', icon: <Svg><path d="M1.500 1.500h13v13h-13z" fill="#fbfbfb" stroke="#b6b6c0" /><path d="M3 3.500h3M7 3.500h4M4.500 5v3.500H6M7 8.500h4M8.500 10v2.500M7 6.500h1" stroke="#667" /><circle cx="10.500" cy="12" r="1.500" stroke="#667" /></Svg> },
    { label: 'Comments Panel', icon: <Svg><ellipse cx="6" cy="5" rx="5.500" ry="4" fill="#c5d4df" stroke="#8496a5" /><path d="M3 8l-1 4 4-3" fill="#8496a5" /><ellipse cx="11" cy="10" rx="4.500" ry="3.800" fill="#d8e4ec" stroke="#71879a" /><path d="M11 13l2 3v-3M3.500 4h5M3.500 6h4M9 9h4M9 11h3" stroke="#71879a" /></Svg> },
    { label: 'Tag Browse Tree', icon: <Svg><path d="M1 1h6l1.500 1.500L7 4.500H1zM7 5.500h6l1.500 2-1.500 2H7zM7 11h6l1.500 2-1.500 2.500H7z" fill="#4b4b4b" /><path d="M3.500 5v8.500H6M3.500 8H6" stroke="#999" /></Svg> },
  ] },
  { name: 'Charts', items: [
    { label: 'Easy Chart', icon: easyChartIcon, marked: true },
    { label: 'Chart', icon: <Svg>{chartPanel}</Svg> },
    { label: 'Sparkline Chart', icon: <Svg><path d="M1 9h2l1.500-3 1.500 4L8 5l2 5 1.500-4 1.500 3" stroke="#8f8f8f" /><circle cx="14" cy="8" r="1.300" fill="#e02020" /></Svg> },
    { label: 'Bar Chart', icon: <Svg>{skewPanel}<path d="M2.500 7H5v5.500H2.500z" fill="#3b78c8" /><path d="M6 4h2.500v9H6z" fill="#3fa447" /><path d="M9.500 5H12v8.500H9.500z" fill="#e3b52c" /></Svg> },
    { label: 'Radar Chart', icon: <Svg><circle cx="8" cy="8" r="7" fill="#f5f5f5" stroke="#a5a5a5" /><path d="M8 1v14M1 8h14M3 3l10 10M13 3L3 13" stroke="#c3c3c3" /><path d="M8 2l4 6-2 4H5L2 8l5-1z" stroke="#666" /></Svg> },
    { label: 'Status Chart', icon: <Svg>{skewPanel}<path d="M3 4h5v2.500H3z" fill="#2fa534" /><path d="M8 4.500h4V7H8z" fill="#e3b52c" /><path d="M5 8h6v2H5z" fill="#c9302c" /><path d="M7 10.500h5V13H7z" fill="#2fa534" /></Svg> },
    { label: 'Pie Chart', icon: <Svg><ellipse cx="8" cy="9.500" rx="7.500" ry="5.500" fill="#1f4d7c" /><ellipse cx="8" cy="7" rx="7.500" ry="5.500" fill="#3f85c6" /><path d="M8 7l7.500-.5c0 4-4 6-9 5.500z" fill="#67b23c" /><path d="M8 7l5-4c2 1 2.500 2 2.500 3.500z" fill="#e6c63a" /></Svg> },
    { label: 'Box and Whisker Chart', icon: <Svg>{skewPanel}<path d="M4 5h2.500v5H4z" fill="#e8606a" /><path d="M9 5h2.500v5H9z" fill="#6878e0" /><path d="M5.250 3v9M10.250 3v10" stroke="#9a7fb0" /></Svg> },
    { label: 'Equipment Schedule', icon: <Svg>{skewPanel}<path d="M2 3h3v3H2zM2 7h3v2.500H2zM2 10.500h3v2H2z" fill="#20e020" /><path d="M6 5h6M7 7.500h4M6 10h2M9 10h3" stroke="#666" strokeDasharray="2 1" /></Svg> },
    { label: 'Gantt Chart', icon: <Svg>{skewPanel}<path d="M3 4h4v2H3zM6 7h4v2H6zM8 10h4v2H8z" fill="#4a8fd8" /><path d="M3 7.500h2M4 10.500h3" stroke="#9fb8d0" /></Svg> },
  ] },
  { name: 'Calendar', items: [
    { label: 'Calendar', icon: cal(twelve) },
    { label: 'Popup Calendar', icon: cal(twelve, <path d="M9.500 7h3v4H15l-4 4.500L7 11h2.500z" fill="#d42a2a" stroke="#8a1414" strokeWidth=".7" />) },
    { label: 'Date Range', icon: cal(twelve, <path d="M0 12l3.500-3.500V11h9V8.500L16 12l-3.500 3.500V13h-9v2.500z" fill="#5ca5dc" />) },
    { label: 'Day View', icon: cal('M6 4.500h1.500V8M6 8.500h3') },
    { label: 'Week View', icon: cal('M5 4.500h4L7 8.500') },
    { label: 'Month View', icon: cal('M4 4.500h2.500v3.500H4M4 6.500h2M9 4v4.500') },
  ] },
  { name: 'Admin', items: [
    { label: 'User Management', icon: <Svg><circle cx="4.500" cy="4" r="3" fill="#5a3b25" /><path d="M0 14c0-8 9-8 9 0z" fill="#2e8b57" /><circle cx="11" cy="4.500" r="3" fill="#e0b070" /><path d="M7 14c0-7 9-7 9 0z" fill="#a9bccb" /><path d="M8 11l2.500 3L15 8.500" stroke="#2566b0" strokeWidth="2" /></Svg> },
    { label: 'Schedule Management', icon: <Svg><path d="M1.500 2.500h9v11h-9z" fill="#f8f8f8" stroke="#9aa4ac" /><path d="M3 5h5v5H3z" fill="#e07060" /><circle cx="11" cy="5" r="4.300" fill="#fff" stroke="#777" /><path d="M11 2.500V5h2" stroke="#444" /><path d="M8 11l2.500 3.500L15 9" stroke="#2f7ad0" strokeWidth="2" /></Svg> },
    { label: 'Roster Management', icon: <Svg><circle cx="4" cy="4" r="3" fill="#3f3a35" /><circle cx="9" cy="3.500" r="2.500" fill="#8b6b3f" /><path d="M0 9c2-4 8-4 9 0l-2 5H4z" fill="#55504a" /><path d="M6 14c-1-3 6-4 7-11 4-1 3 4 0 8s-6 5-7 3z" fill="#dfe7ee" stroke="#8496a5" /></Svg> },
    { label: 'SFC Monitor', icon: <Svg><path d="M5 0h7L8.500 5z" fill="#1f5f92" /><path d="M8.500 5v3M2.500 11V8h11v3" stroke="#f09a2a" /><path d="M0 11h5v5H0zM10.500 11h5v5h-5z" fill="#1b4a70" /></Svg> },
  ] },
  { name: 'Alarming', items: [] },
];

function Palette() {
  return (
    <aside className="flex w-[222px] flex-col pt-[3px]">
      <PanelTitle title="Component Palette" />
      <div className="flex h-[28px] shrink-0 items-center bg-gradient-to-b from-[#efeeeb] to-[#e0ddd6] pl-[3px] pr-1">
        <ToolButton name="Components">
          <Svg><path d="M2 4.500c0-5.500 12-5.500 12 0z" fill="#18a82c" stroke="#0b6b18" /><path d="M8 5v5" stroke="#333" /><path d="M1.500 8.500L8 12l6.500-3.500v7L8 12l-6.500 3.500z" fill="#fff" stroke="#333" /></Svg>
        </ToolButton>
        <Sep />
        <ToolButton name="Expand all">{expandIcon}</ToolButton>
        <ToolButton name="Collapse all">{collapseIcon}</ToolButton>
        <Sep />
        <label className="flex h-5 min-w-0 flex-1 items-center border border-[#77776f] bg-white pl-0.5">
          <svg viewBox="0 0 18 12" className="w-[18px] h-3 shrink-0" fill="none" aria-hidden="true"><circle cx="5" cy="5" r="3.500" stroke="#a3a29d" strokeWidth="2" /><path d="M7.500 7.500l4 4" stroke="#a3a29d" strokeWidth="2" /><path d="M12 5h5l-2.500 3z" fill="#a3a29d" /></svg>
          <input aria-label="Filter" placeholder="Filter" className="min-w-0 flex-1 bg-transparent pl-1 placeholder:text-[#9c9a92]" />
        </label>
      </div>
      <div className="mr-px flex min-h-0 flex-1 overflow-hidden border border-b-0 border-[#5f6059] bg-white">
        <div className="flex min-w-0 flex-1 flex-col gap-2.5 overflow-hidden pl-[13px] pr-3 pt-[13px]">
          {palette.map(c => (
            <section key={c.name} className={clsx('shrink-0', !c.items && 'pb-px')}>
              <h3 className="flex h-[22px] items-center gap-[7px] bg-[#c1c5c9] pl-1.5">
                <svg viewBox="0 0 9 9" className="w-[9px] h-[9px]" fill="none"><path d="M.5.5h8v8h-8z" fill="#fff" stroke="#a9a690" /><path d={c.items ? 'M2 4.500h5' : 'M2 4.500h5M4.500 2v5'} stroke="#000" /></svg>
                {c.name}
              </h3>
              <ul className="border-x border-b border-[#c1c5c9] bg-[#edece8] empty:hidden">
                {c.items?.map(it => (
                  <li key={it.label} className="relative flex h-[23px] items-center gap-1 pl-[23px] first:h-[22px]">
                    {it.icon}
                    {it.label}
                    {it.marked && <span className="absolute -top-px left-1 h-[25px] w-36 border-[3px] border-[#ea4b42]" />}
                  </li>
                ))}
              </ul>
            </section>
          ))}
        </div>
        <Scrollbar thumb="h-[539px]" noEnd />
      </div>
    </aside>
  );
}

/* ---------- shape tools ---------- */

const shapeTools: ({ name: string; icon: ReactNode; on?: boolean } | 'line')[] = [
  { name: 'Select', on: true, icon: <Svg><path d="M4 1l8 8H8.500l2 4.500-2 1-2-4.500L4 12z" fill="#000" /></Svg> },
  'line',
  { name: 'Rectangle', icon: <Svg><path d="M3.500 3.500h9v9h-9z" fill="#fff" stroke="#222" /></Svg> },
  { name: 'Ellipse', icon: <Svg><circle cx="8" cy="8" r="5.500" fill="#fff" stroke="#222" /></Svg> },
  { name: 'Polygon', icon: <Svg><path d="M8 3.500l4.500 9h-9z" fill="#fff" stroke="#222" /></Svg> },
  { name: 'Arrow', icon: <Svg><path d="M1.500 5.500h8v-2L15 8l-5.500 4.500v-2h-8z" fill="#fff" stroke="#222" /></Svg> },
  { name: 'Pencil', icon: <Svg><path d="M1.500 4c3-2 1 8 3 9s4-2 4-5" stroke="#444" /><path d="M8 9l1-4 4-4 3 5-5 3z" fill="#eab54a" stroke="#b98420" strokeWidth=".6" /></Svg> },
  { name: 'Line', icon: <Svg><path d="M8 2L1 6l5 2-4 3h6l-4 3" stroke="#444" /><path d="M9 10l1-3.500 4.500-4.500 1 4-3.500 3z" fill="#8b9be0" stroke="#5a6ab0" strokeWidth=".6" /></Svg> },
  'line',
  { name: 'Path edit', icon: <Svg><path d="M2.500 13c0-12 4-6 6-4s5 1 5-6" stroke="#444" /><path d="M1 11.500h3v3H1zM7 8h3v3H7zM12.500 1.500h3v3h-3zM4 4h2v2H4z" fill="#fff" stroke="#444" strokeWidth=".8" /></Svg> },
  { name: 'Gradient', icon: <Svg><path d="M1 1h3v14H1z" fill="#7d7d7d" /><path d="M4 1h3v14H4z" fill="#9d9d9d" /><path d="M7 1h3v14H7z" fill="#bdbdbd" /><path d="M10 1h3v14h-3z" fill="#dadada" /><path d="M3 8h10" stroke="#222" /><circle cx="2.500" cy="8" r="1.300" fill="#fff" stroke="#222" /><circle cx="14" cy="8" r="1.300" fill="#fff" stroke="#222" /></Svg> },
  { name: 'Eyedropper', icon: <Svg><path d="M2 14.500l1-3 6-6 2 2-6 6z" fill="#fff" stroke="#222" /><path d="M8 4.500L12 1c2-1 4 1 3 3l-3.500 4z" fill="#10103a" /></Svg> },
];

/* ---------- page ---------- */

const menus: [string, string][] = [
  ['F', 'ile'], ['E', 'dit'], ['V', 'iew'], ['P', 'roject'], ['', 'Component'], ['', 'Alignment'], ['', 'Shape'], ['T', 'ools'], ['H', 'elp'],
];

export default function App() {
  return (
    <div className="flex h-screen w-full overflow-hidden bg-[#edece8] font-['Liberation_Sans',Arial,sans-serif] text-xs leading-4 text-black">
      <div className="flex min-w-0 flex-1 flex-col border-t border-[#9fb0ba]">
        <nav className="flex h-6 shrink-0 items-center gap-[14px] border-t border-[#25333c] bg-gradient-to-b from-[#f0eeec] to-[#e4e0d9] pl-1 pt-0.5 font-bold">
          {menus.map(([key, rest]) => <button key={rest}><u>{key}</u>{rest}</button>)}
        </nav>

        <div className="flex h-[25px] shrink-0 items-center" role="toolbar">
          {toolbar.map((t, i) => {
            if (t === 'sep') return <span key={i} className="flex w-[5px] justify-center"><span className="h-5 w-px bg-[#a9a8a4]" /></span>;
            if (t === 'dots') return <span key={i} className={clsx('flex justify-center', i ? 'w-[13px]' : 'w-2')}><span className="h-4 w-[2px] bg-[repeating-linear-gradient(180deg,#283c78_0_2px,transparent_2px_4px)]" /></span>;
            if (t === 'caret') return <Caret key={i} />;
            if (t === 'caretOff') return <Caret key={i} off />;
            return <ToolButton key={i} name={t.name} on={t.on}>{t.icon}</ToolButton>;
          })}
        </div>

        <div className="flex min-h-0 flex-1">
          <div className="flex w-[350px] flex-col pr-px pt-[3px]">
            <ProjectBrowser />
            <div className="flex h-[7px] items-center justify-center"><Dots /></div>
            <TagBrowser />
            <div className="flex h-2 shrink-0 items-center justify-center"><Dots /></div>
            <PropertyEditor />
          </div>
          <div className="flex w-[3px] items-center justify-center pt-4"><Dots vertical /></div>
          <Workspace />
          <div className="flex w-[3px] items-center justify-center pt-4"><Dots vertical /></div>
          <Palette />
          <div className="flex w-[25px] flex-col items-center pt-[3px]" role="toolbar">
            <span className="mb-[3px] h-[2px] w-3.5 bg-[repeating-linear-gradient(90deg,#283c78_0_2px,transparent_2px_4px)]" />
            {shapeTools.map((t, i) => t === 'line'
              ? <span key={i} className="my-[2px] h-px w-5 bg-[#a9a8a4]" />
              : <ToolButton key={i} name={t.name} on={t.on}>{t.icon}</ToolButton>)}
          </div>
        </div>
      </div>
      <div className="flex w-[5px] flex-col border-l border-[#15202c]">
        <span className="h-[250px] bg-gradient-to-b from-[#9fb0ba] to-[#55789c]" />
        <span className="flex-1 bg-[#18365a]" />
      </div>
    </div>
  );
}
